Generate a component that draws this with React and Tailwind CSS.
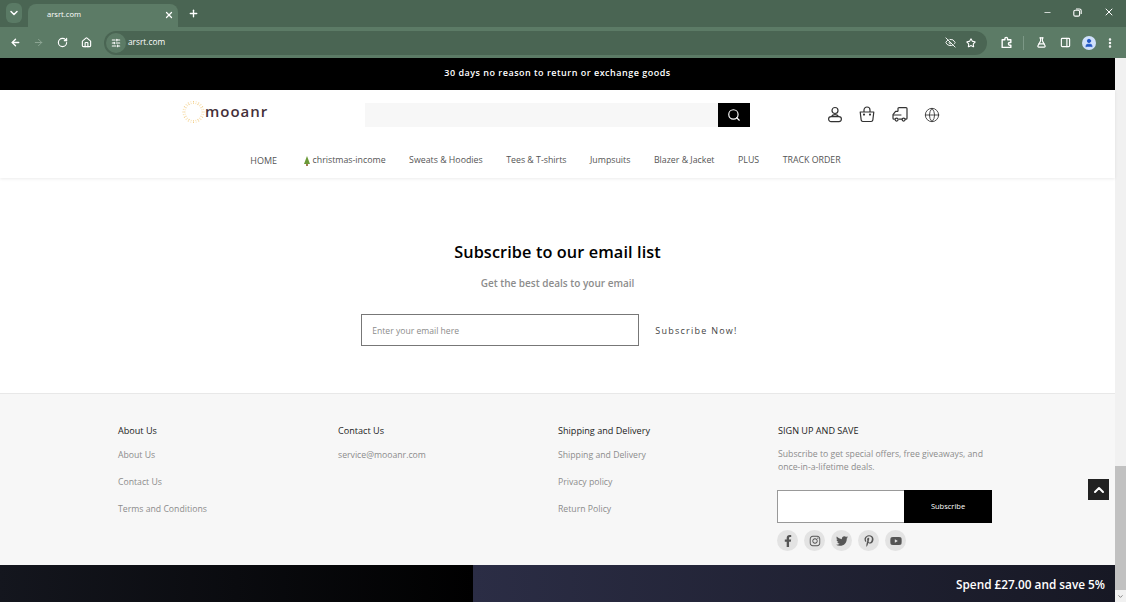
import { ChevronDown, X, Plus, ArrowLeft, ArrowRight, RotateCw, Home, SlidersHorizontal, EyeOff, Star, FlaskConical, PanelRight, User, MoreVertical, Minus, Search, Globe, ChevronUp } from "lucide-react";
import { FaFacebookF, FaInstagram, FaTwitter, FaPinterestP, FaYoutube } from "react-icons/fa";

const navLinks = ["Sweats & Hoodies", "Tees & T-shirts", "Jumpsuits", "Blazer & Jacket", "PLUS", "TRACK ORDER"];

const footerColumns = [
  { title: "About Us", links: ["About Us", "Contact Us", "Terms and Conditions"] },
  { title: "Contact Us", links: ["service@mooanr.com"] },
  { title: "Shipping and Delivery", links: ["Shipping and Delivery", "Privacy policy", "Return Policy"] },
];

const socials = [FaFacebookF, FaInstagram, FaTwitter, FaPinterestP, FaYoutube];

function ExtensionIcon() {
  return (
    <svg width="13" height="13" viewBox="0 0 24 24" fill="none" stroke="currentColor" strokeWidth="2.6" strokeLinejoin="round" className="ml-[13px]">
      <path d="M4 7h5V5a2.5 2.5 0 0 1 5 0v2h6v5h-2a2.5 2.5 0 0 0 0 5h2v4H4z" />
    </svg>
  );
}

function RestoreIcon() {
  return (
    <svg width="9" height="9" viewBox="0 0 9 9" fill="none" stroke="currentColor" strokeWidth="1.1">
      <rect x="0.8" y="2.3" width="5.8" height="5.8" rx="1.4" />
      <path d="M3 1h3.4A1.8 1.8 0 0 1 8.2 2.8V6" />
    </svg>
  );
}

function BrowserBar() {
  return (
    <div className="bg-[#4a6553] text-white">
      <div className="flex h-[27px] items-end pl-[6px]">
        <div className="mb-[4px] flex h-[20px] w-[16px] items-center justify-center rounded-md bg-[#5a7a65]">
          <ChevronDown size={12} strokeWidth={3} />
        </div>
        <div className="ml-[6px] flex h-[23px] w-[150px] items-center justify-between rounded-t-lg bg-[#5c7b66] pb-[2px] pl-[19px] pr-[4px] text-[7.6px]">
          <span>arsrt.com</span>
          <X size={10} strokeWidth={3} />
        </div>
        <div className="mb-[8px] ml-[10px]">
          <Plus size={11} strokeWidth={3} />
        </div>
        <div className="mb-[9px] ml-auto flex items-center gap-[21px] pr-[11px]">
          <Minus size={9} strokeWidth={2} />
          <RestoreIcon />
          <X size={12} strokeWidth={2} />
        </div>
      </div>
      <div className="flex h-[31px] items-center bg-[#5c7b66] pl-[10px] pr-[8px]">
        <ArrowLeft size={11} strokeWidth={3} />
        <ArrowRight size={11} strokeWidth={2} className="ml-[12px] text-[#8fa796]" />
        <RotateCw size={11} strokeWidth={2.5} className="ml-[13px]" />
        <Home size={11} strokeWidth={2.5} className="ml-[13px]" />
        <div className="ml-[12px] flex h-[24px] w-[883px] items-center rounded-full bg-[#4a6553] pl-[2px] pr-[11px] text-[8.3px]">
          <div className="flex h-[20px] w-[20px] items-center justify-center rounded-full bg-[#5c7b66]">
            <SlidersHorizontal size={10} strokeWidth={2.5} />
          </div>
          <span className="ml-[2px]">arsrt.com</span>
          <EyeOff size={11} className="ml-auto" />
          <Star size={10} strokeWidth={2.5} className="ml-[10px]" />
        </div>
        <ExtensionIcon />
        <div className="ml-[10px] h-[14px] w-px bg-[#7c9886]" />
        <FlaskConical size={11} strokeWidth={2.5} className="ml-[12px]" />
        <PanelRight size={11} strokeWidth={2.5} className="ml-[13px]" />
        <div className="ml-[11px] flex h-[14px] w-[14px] items-center justify-center rounded-full bg-[#cfe0fb] text-[#1f56c4]">
          <User size={10} fill="currentColor" strokeWidth={2} />
        </div>
        <MoreVertical size={12} strokeWidth={3} className="ml-[8px]" />
      </div>
    </div>
  );
}

function Logo() {
  const rays = Array.from({ length: 24 }, (_, i) => (i * 360) / 24);
  return (
    <div className="mb-[6px] flex items-center pl-px">
      <svg width="23" height="26" viewBox="0 0 24 26">
        {rays.map((deg) => (
          <line key={deg} x1="12" y1="1.5" x2="12" y2="4.5" stroke={deg % 30 === 0 ? "#f3d08c" : "#f8e3b8"} strokeWidth="1.1" strokeDasharray="1.2 0.6" transform={`rotate(${deg} 12 13)`} />
        ))}
      </svg>
      <span className="text-[15px] font-semibold tracking-[1px] text-[#45313a]">mooanr</span>
    </div>
  );
}

function AccountIcon() {
  return (
    <svg width="16" height="17" viewBox="0 0 16 17" fill="none" stroke="currentColor" strokeWidth="1.2">
      <circle cx="8" cy="4.5" r="3" />
      <rect x="1.6" y="10.6" width="12.8" height="5" rx="2.5" />
      <path d="M4.5 10.6c.6-1.4 2-2 3.5-2s2.9.6 3.5 2" />
    </svg>
  );
}

function BagIcon() {
  return (
    <svg width="16" height="17" viewBox="0 0 16 17" fill="none" stroke="currentColor" strokeWidth="1.2" strokeLinejoin="round">
      <path d="M1.2 6h13.6l-1 8.2a1.6 1.6 0 0 1-1.6 1.3H3.8a1.6 1.6 0 0 1-1.6-1.3z" />
      <path d="M5 6V4a3 3 0 0 1 6 0v2" />
      <circle cx="5" cy="8.6" r=".5" fill="currentColor" />
      <circle cx="11" cy="8.6" r=".5" fill="currentColor" />
    </svg>
  );
}

function TruckIcon() {
  return (
    <svg width="16" height="17" viewBox="0 0 16 17" fill="none" stroke="currentColor" strokeWidth="1.2" strokeLinejoin="round">
      <path d="M6 5.4V2.6a1 1 0 0 1 1-1h7a1 1 0 0 1 1 1v9.6a1 1 0 0 1-1 1h-1" />
      <path d="M6 5.4H3.6L1 8.6v3.6a1 1 0 0 0 1 1h.8" />
      <path d="M1 9h8.4M6.6 13.2h3.8" />
      <circle cx="4.6" cy="13.6" r="1.5" />
      <circle cx="11.6" cy="13.6" r="1.5" />
    </svg>
  );
}

function Header() {
  return (
    <div className="relative z-10 h-[88px] bg-white shadow-[0_1px_3px_rgba(0,0,0,0.08)]">
      <div className="flex h-[48px] items-center pl-[181px] pt-[1px]">
        <div className="w-[184px]">
          <Logo />
        </div>
        <div className="flex h-[24px] w-[385px]">
          <div className="h-full flex-1 bg-[#f7f7f7]" />
          <div className="flex h-full w-[32px] items-center justify-center bg-black text-white">
            <Search size={14} strokeWidth={2} />
          </div>
        </div>
        <div className="ml-[77px] flex items-center gap-[16.4px] text-[#333]">
          <AccountIcon />
          <BagIcon />
          <TruckIcon />
          <Globe size={16} strokeWidth={1.3} />
        </div>
      </div>
      <div className="flex h-[38px] items-center justify-center gap-[23.5px] pr-[24px] pt-[7px] text-[8.8px] text-[#555]">
        <span className="mr-[2px] text-[9px]">HOME</span>
        <span className="flex items-center gap-[2px]">
          <svg width="8" height="10" viewBox="0 0 8 10">
            <path d="M4 0 L7 8 H1 Z" fill="#6b9a38" />
            <rect x="3.2" y="8" width="1.6" height="2" fill="#8a5a2c" />
          </svg>
          christmas-income
        </span>
        {navLinks.map((link) => (
          <span key={link}>{link}</span>
        ))}
      </div>
    </div>
  );
}

function SubscribeSection() {
  return (
    <div className="flex h-[216px] flex-col items-center border-b border-[#e8e8e8] bg-white pt-[61px]">
      <h2 className="text-[16.3px] leading-[26px] font-semibold tracking-[0.1px] text-black">Subscribe to our email list</h2>
      <p className="mt-[10px] text-[10px] leading-[16px] font-semibold text-[#8c8c8c]">Get the best deals to your email</p>
      <div className="mr-[16px] mt-[23px] flex items-center">
        <div className="flex h-[32px] w-[278px] items-center border border-[#777] pl-[10px] pt-[2px] text-[8.6px] text-[#8c8c8c]">Enter your email here</div>
        <span className="ml-[16px] mt-[2px] text-[9px] tracking-[1.25px] text-[#444]">Subscribe Now!</span>
      </div>
    </div>
  );
}

function Footer() {
  return (
    <div className="flex h-[171px] bg-[#f7f7f7] pl-[118px] pt-[30px]">
      {footerColumns.map((col) => (
        <div key={col.title} className="w-[220px]">
          <h3 className="text-[9.1px] leading-[14px] font-medium text-[#222]">{col.title}</h3>
          <div className="mt-[10px] flex flex-col gap-[13px]">
            {col.links.map((link) => (
              <a key={link} className="text-[8.7px] leading-[14px] text-[#8c8c8c]">{link}</a>
            ))}
          </div>
        </div>
      ))}
      <div className="w-[215px]">
        <h3 className="text-[9.1px] leading-[14px] font-medium text-[#222]">SIGN UP AND SAVE</h3>
        <p className="mt-[10px] text-[8.7px] leading-[13px] text-[#8c8c8c]">Subscribe to get special offers, free giveaways, and once-in-a-lifetime deals.</p>
        <div className="-ml-px mt-[16px] flex h-[33px] w-[215px]">
          <div className="w-[127px] border border-[#999] border-r-0 bg-white" />
          <div className="flex flex-1 items-center justify-center bg-black text-[7.5px] text-white">Subscribe</div>
        </div>
        <div className="-ml-px mt-[7px] flex gap-[6px]">
          {socials.map((Icon, i) => (
            <div key={i} className="flex h-[21px] w-[21px] items-center justify-center rounded-full bg-[#e3e3e3] text-[#555]">
              <Icon size={12} />
            </div>
          ))}
        </div>
      </div>
    </div>
  );
}

function Scrollbar() {
  return (
    <div className="flex w-[11px] flex-col items-center bg-[#f1f1f1]">
      <div className="mt-[408px] h-[124px] w-full bg-[#c1c1c1]" />
      <ChevronDown size={7} strokeWidth={3} className="mt-[3px] text-[#777]" />
    </div>
  );
}

export default function App() {
  return (
    <div className="relative h-[602px] w-[1126px] overflow-hidden font-['Open_Sans',sans-serif]">
      <BrowserBar />
      <div className="flex h-[544px]">
        <div className="relative flex-1">
          <div className="flex h-[32px] items-center justify-center bg-black pb-[2px] text-[9px] font-semibold tracking-[0.5px] text-white">
            30 days no reason to return or exchange goods
          </div>
          <Header />
          <SubscribeSection />
          <Footer />
          <div className="flex h-[37px] items-center justify-end bg-[linear-gradient(90deg,#14161e,#000_42.42%,#2b2d45_42.42%,#171824_100%)] pr-[10px] pt-[2px] text-[11.8px] font-semibold text-white">
            Spend £27.00 and save 5%
          </div>
          <div className="absolute left-[1088px] top-[421px] flex h-[21px] w-[21px] items-center justify-center bg-[#222] text-white">
            <ChevronUp size={16} strokeWidth={3} />
          </div>
        </div>
        <Scrollbar />
      </div>
    </div>
  );
}
